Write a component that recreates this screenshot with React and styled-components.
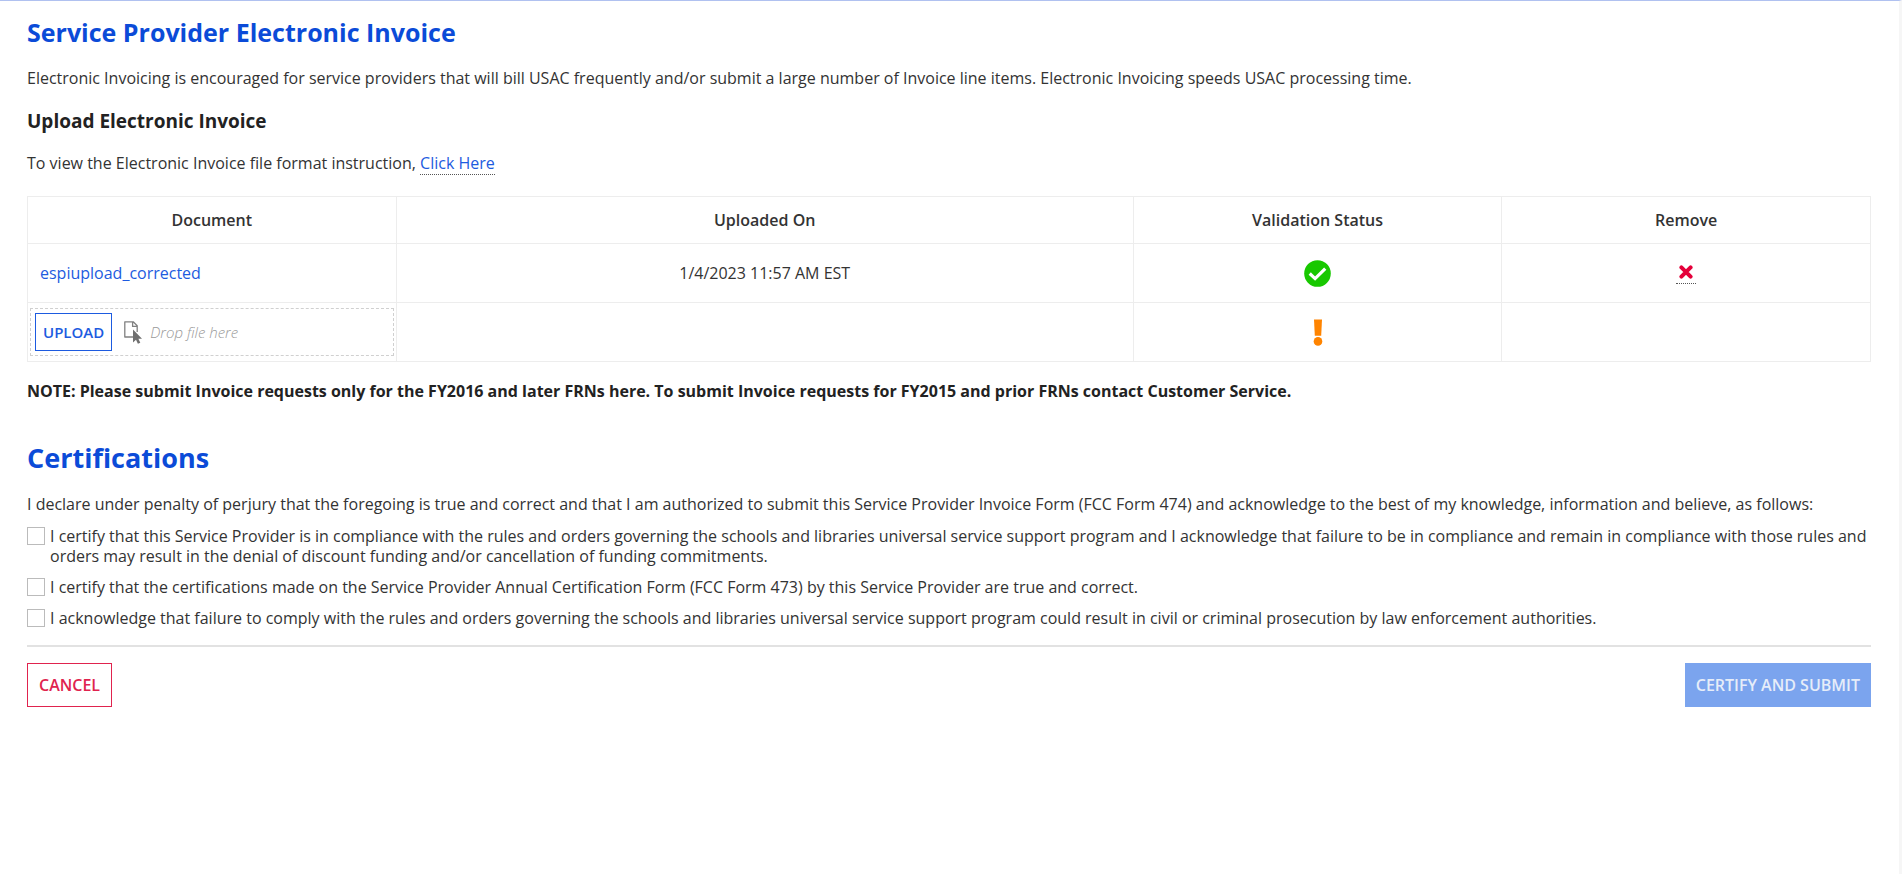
import { useState } from "react";
import styled, { createGlobalStyle } from "styled-components";

const GlobalStyle = createGlobalStyle`
  * {
    box-sizing: border-box;
  }

  body {
    margin: 0;
    background: #ffffff;
    color: #333333;
    font-family: "Open Sans", "Noto Sans", sans-serif;
    font-size: 16px;
    line-height: 20px;
  }

  button {
    font-family: inherit;
  }
`;

const Page = styled.main`
  min-height: 100vh;
  padding: 15px 28px 32px 27px;
  border-top: 1px solid #b0c1f0;
  border-right: 3px solid #f6f6f6;
`;

const Title = styled.h1`
  margin: 0 0 20px;
  color: #0b4bd8;
  font-size: 25px;
  line-height: 32px;
  font-weight: 700;
`;

const SectionTitle = styled(Title).attrs({ as: "h2" })`
  margin: 41px 0 20px;
  font-size: 27px;
`;

const Subtitle = styled.h3`
  margin: 0 0 20px;
  color: #222222;
  font-size: 19px;
  line-height: 24px;
  font-weight: 700;
`;

const Text = styled.p`
  margin: 0 0 21px;
`;

const FormatHint = styled(Text)`
  margin-bottom: 23px;
`;

const Declaration = styled(Text)`
  margin-bottom: 12px;
`;

const Note = styled.p`
  margin: 19px 0 0;
  color: #222222;
  font-weight: 700;
`;

const TextLink = styled.a`
  color: #1d5be0;
  text-decoration: none;
  border-bottom: ${({ $dotted }) => ($dotted ? "1px dotted #555555" : "none")};
`;

const Table = styled.table`
  width: 100%;
  table-layout: fixed;
  border-collapse: collapse;
`;

const HeadCell = styled.th`
  width: ${({ $width }) => $width};
  height: 47px;
  padding: 0 12px;
  border: 1px solid #ededed;
  color: #333333;
  font-weight: 600;
`;

const Cell = styled.td`
  height: 59px;
  padding: ${({ $flush }) => ($flush ? "0 2px" : "0 12px")};
  border: 1px solid #ededed;
  text-align: ${({ $left }) => ($left ? "left" : "center")};

  & > svg {
    display: block;
    margin: 0 auto;
  }
`;

const DropZone = styled.div`
  display: flex;
  align-items: center;
  height: 48px;
  padding: 0 4px;
  border: 1px dashed #d0d0d0;
`;

const DropHint = styled.span`
  margin-left: 8px;
  color: #999999;
  font-size: 15px;
  font-style: italic;
  font-weight: 300;
`;

const Button = styled.button`
  height: 44px;
  padding: 0 11px;
  border: 1px solid #e0234e;
  background: #ffffff;
  color: #e0234e;
  font-size: 16px;
  font-weight: 600;
  cursor: pointer;
`;

const UploadButton = styled(Button)`
  height: 38px;
  margin-right: 12px;
  padding: 0 7px;
  border-color: #1d5be0;
  color: #1d5be0;
  font-size: 15px;
`;

const SubmitButton = styled(Button)`
  padding: 0 10px;
  border-color: #7ba4ee;
  background: #7ba4ee;
  color: #e6edf9;
`;

const RemoveButton = styled.button`
  width: 20px;
  padding: 0 3px 4px;
  border: none;
  border-bottom: 1px dotted #555555;
  background: none;
  cursor: pointer;

  & svg {
    display: block;
  }
`;

const CheckList = styled.div`
  display: flex;
  flex-direction: column;
  gap: 11px;
`;

const CheckLabel = styled.label`
  display: flex;
  align-items: flex-start;
  gap: 5px;
`;

const Checkbox = styled.input`
  appearance: none;
  flex: none;
  width: 18px;
  height: 18px;
  margin: 1px 0 0;
  border: 1px solid #bbbbbb;
  background: #ffffff;

  &:checked {
    background: #1d5be0;
  }
`;

const Footer = styled.footer`
  display: flex;
  justify-content: space-between;
  margin-top: 17px;
  padding-top: 16px;
  border-top: 2px solid #e2e2e2;
`;

const ValidIcon = () => (
  <svg width="27" height="27" viewBox="0 0 27 27" role="img" aria-label="Valid">
    <circle cx="13.5" cy="13.5" r="13.3" fill="#18c800" />
    <path
      d="M6.9 14.6l4.2 4 9-8.8"
      fill="none"
      stroke="#ffffff"
      strokeWidth="3.2"
      strokeLinecap="square"
    />
  </svg>
);

const PendingIcon = () => (
  <svg width="10" height="27" viewBox="0 0 10 27" role="img" aria-label="Pending">
    <path d="M1 .5h8l-.8 16.3H1.8z" fill="#ff8400" />
    <circle cx="5" cy="22.4" r="4.3" fill="#ff8400" />
  </svg>
);

const RemoveIcon = () => (
  <svg width="14" height="14" viewBox="0 0 14 14" aria-hidden="true">
    <path
      d="M2.4 2.4l9.2 9.2M11.6 2.4l-9.2 9.2"
      stroke="#e4003a"
      strokeWidth="4"
      strokeLinecap="round"
    />
  </svg>
);

const DropIcon = () => (
  <svg width="18" height="24" viewBox="0 0 18 24" aria-hidden="true">
    <path
      d="M9 17H.8V1.8h8.4l4 4V12M8.6 1.8v4.6h4.6"
      fill="none"
      stroke="#808080"
      strokeWidth="1.3"
      strokeLinejoin="round"
    />
    <path d="M9 9.5v13l3-2.8 1.9 4.1 2.4-1.1-1.9-4h3.6z" fill="#707070" />
  </svg>
);

const columns = [
  { name: "Document", width: "20%" },
  { name: "Uploaded On", width: "40%" },
  { name: "Validation Status", width: "20%" },
  { name: "Remove", width: "20%" },
];

const certifications = [
  "I certify that this Service Provider is in compliance with the rules and orders governing the schools and libraries universal service support program and I acknowledge that failure to be in compliance and remain in compliance with those rules and orders may result in the denial of discount funding and/or cancellation of funding commitments.",
  "I certify that the certifications made on the Service Provider Annual Certification Form (FCC Form 473) by this Service Provider are true and correct.",
  "I acknowledge that failure to comply with the rules and orders governing the schools and libraries universal service support program could result in civil or criminal prosecution by law enforcement authorities.",
];

const App = () => {
  const [checked, setChecked] = useState(certifications.map(() => false));

  const toggle = (index) => {
    setChecked(checked.map((value, i) => (i === index ? !value : value)));
  };

  return (
    <>
      <GlobalStyle />
      <Page>
        <Title>Service Provider Electronic Invoice</Title>
        <Text>
          Electronic Invoicing is encouraged for service providers that will
          bill USAC frequently and/or submit a large number of Invoice line
          items. Electronic Invoicing speeds USAC processing time.
        </Text>
        <Subtitle>Upload Electronic Invoice</Subtitle>
        <FormatHint>
          To view the Electronic Invoice file format instruction,{" "}
          <TextLink href="#format" $dotted>
            Click Here
          </TextLink>
        </FormatHint>

        <Table>
          <thead>
            <tr>
              {columns.map((column) => (
                <HeadCell key={column.name} $width={column.width}>
                  {column.name}
                </HeadCell>
              ))}
            </tr>
          </thead>
          <tbody>
            <tr>
              <Cell $left>
                <TextLink href="#document">espiupload_corrected</TextLink>
              </Cell>
              <Cell>1/4/2023 11:57 AM EST</Cell>
              <Cell>
                <ValidIcon />
              </Cell>
              <Cell>
                <RemoveButton type="button" aria-label="Remove document">
                  <RemoveIcon />
                </RemoveButton>
              </Cell>
            </tr>
            <tr>
              <Cell $left $flush>
                <DropZone>
                  <UploadButton type="button">UPLOAD</UploadButton>
                  <DropIcon />
                  <DropHint>Drop file here</DropHint>
                </DropZone>
              </Cell>
              <Cell />
              <Cell>
                <PendingIcon />
              </Cell>
              <Cell />
            </tr>
          </tbody>
        </Table>
        <Note>
          NOTE: Please submit Invoice requests only for the FY2016 and later
          FRNs here. To submit Invoice requests for FY2015 and prior FRNs
          contact Customer Service.
        </Note>

        <SectionTitle>Certifications</SectionTitle>
        <Declaration>
          I declare under penalty of perjury that the foregoing is true and
          correct and that I am authorized to submit this Service Provider
          Invoice Form (FCC Form 474) and acknowledge to the best of my
          knowledge, information and believe, as follows:
        </Declaration>
        <CheckList>
          {certifications.map((text, index) => (
            <CheckLabel key={text}>
              <Checkbox
                type="checkbox"
                checked={checked[index]}
                onChange={() => toggle(index)}
              />
              <span>{text}</span>
            </CheckLabel>
          ))}
        </CheckList>

        <Footer>
          <Button type="button">CANCEL</Button>
          <SubmitButton type="submit" disabled={checked.includes(false)}>
            CERTIFY AND SUBMIT
          </SubmitButton>
        </Footer>
      </Page>
    </>
  );
};

export default App;
